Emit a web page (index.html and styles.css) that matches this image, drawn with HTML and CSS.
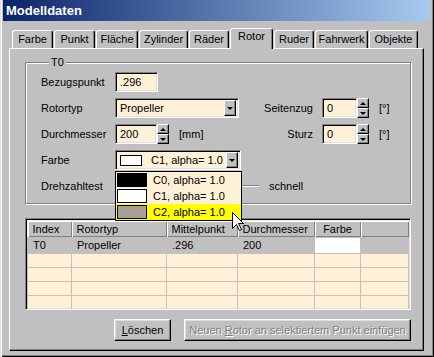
FILE: index.html
```html
<!DOCTYPE html>
<html lang="de">
<head>
    <meta charset="UTF-8">
    <title>Modelldaten</title>
    <link rel="stylesheet" href="styles.css">
</head>
<body>
    <div class="window">
        <div class="titlebar">Modelldaten</div>
        <div class="content">
            <div class="tabs">
                <div class="tab">Farbe</div>
                <div class="tab">Punkt</div>
                <div class="tab">Fläche</div>
                <div class="tab">Zylinder</div>
                <div class="tab">Räder</div>
                <div class="tab active">Rotor</div>
                <div class="tab">Ruder</div>
                <div class="tab">Fahrwerk</div>
                <div class="tab">Objekte</div>
            </div>
            <div class="page">
                <fieldset class="group">
                    <legend>T0</legend>
                    <div class="form">
                        <span class="label">Bezugspunkt</span>
                        <div class="cell"><div class="field w-ref">.296</div></div>

                        <span class="label">Rotortyp</span>
                        <div class="cell">
                            <div class="combo w-typ">
                                <span class="combo-text">Propeller</span>
                                <span class="combo-btn"><i class="down"></i></span>
                            </div>
                        </div>
                        <span class="label right">Seitenzug</span>
                        <div class="cell">
                            <div class="spin">
                                <div class="field w-small">0</div>
                                <div class="spin-btns"><span class="sbtn"><i class="up"></i></span><span class="sbtn"><i class="down"></i></span></div>
                            </div>
                        </div>
                        <span class="unit">[°]</span>

                        <span class="label">Durchmesser</span>
                        <div class="cell">
                            <div class="spin">
                                <div class="field w-dia">200</div>
                                <div class="spin-btns"><span class="sbtn"><i class="up"></i></span><span class="sbtn"><i class="down"></i></span></div>
                            </div>
                            <span class="unit">[mm]</span>
                        </div>
                        <span class="label right">Sturz</span>
                        <div class="cell">
                            <div class="spin">
                                <div class="field w-small">0</div>
                                <div class="spin-btns"><span class="sbtn"><i class="up"></i></span><span class="sbtn"><i class="down"></i></span></div>
                            </div>
                        </div>
                        <span class="unit">[°]</span>

                        <span class="label">Farbe</span>
                        <div class="cell">
                            <div class="combo w-col">
                                <span class="swatch white"></span>
                                <span class="combo-text">C1, alpha= 1.0</span>
                                <span class="combo-btn"><i class="down"></i></span>
                            </div>
                        </div>

                        <span class="label">Drehzahltest</span>
                        <div class="cell wide">
                            <div class="track"></div>
                            <span class="unit">schnell</span>
                        </div>
                    </div>
                </fieldset>

                <div class="grid">
                    <table>
                        <colgroup>
                            <col style="width:44px"><col style="width:95px"><col style="width:71px">
                            <col style="width:77px"><col style="width:46px"><col>
                        </colgroup>
                        <tr class="head">
                            <th>Index</th><th>Rotortyp</th><th>Mittelpunkt</th><th>Durchmesser</th><th class="center">Farbe</th><th></th>
                        </tr>
                        <tr class="selected">
                            <td>T0</td><td>Propeller</td><td>.296</td><td>200</td><td class="colour"></td><td></td>
                        </tr>
                        <tr><td></td><td></td><td></td><td></td><td></td><td></td></tr>
                        <tr><td></td><td></td><td></td><td></td><td></td><td></td></tr>
                        <tr><td></td><td></td><td></td><td></td><td></td><td></td></tr>
                        <tr><td></td><td></td><td></td><td></td><td></td><td></td></tr>
                    </table>
                </div>

                <div class="buttons">
                    <button class="btn w-del"><u>L</u>öschen</button>
                    <button class="btn w-new" disabled>Neuen <u>R</u>otor an selektiertem Punkt einfügen</button>
                </div>
            </div>
        </div>

        <!-- aufgeklappte Farbliste -->
        <div class="dropdown">
            <div class="item"><span class="swatch big black"></span>C0, alpha= 1.0</div>
            <div class="item"><span class="swatch big white"></span>C1, alpha= 1.0</div>
            <div class="item hot"><span class="swatch big grey"></span>C2, alpha= 1.0</div>
        </div>
        <svg class="cursor" width="12" height="20" viewBox="0 0 12 20">
            <path d="M0.5 0.5 L0.5 16.5 L4.5 12.5 L7.5 18.5 L9.5 17.5 L6.5 11.5 L11.5 11.5 Z" fill="#fff" stroke="#000" stroke-width="1"/>
        </svg>
    </div>
</body>
</html>
```

FILE: styles.css
```css
* {
    box-sizing: border-box;
}
body {
    margin: 0;
    font-family: "Liberation Sans", Arial, sans-serif;
    font-size: 11px;
    background-color: #c0c0c0;
}
.window {
    position: relative;
    width: 434px;
    height: 357px;
    padding: 0 4px 0 3px;
    background-color: #c0c0c0;
    box-shadow: inset 1px 0 #dfdfdf, inset 2px 0 #fff, inset -1px -1px #000, inset -2px -2px #808080;
    overflow: hidden;
}
.titlebar {
    height: 21px;
    line-height: 21px;
    padding-left: 3px;
    color: white;
    font-weight: bold;
    font-size: 13px;
    background: linear-gradient(to right, #0a246a, #a6caf0);
}
.content {
    padding: 7px 0 0 6px;
}

/* Reiter */
.tabs {
    display: flex;
    align-items: flex-end;
    gap: 1px;
    height: 20px;
    padding-left: 3px;
    position: relative;
    z-index: 1;
}
.tab {
    height: 18px;
    line-height: 17px;
    text-align: center;
    background-color: #c0c0c0;
    border: 1px solid #fff;
    border-bottom: none;
    border-right-color: #000;
    border-radius: 3px 3px 0 0;
    box-shadow: inset -1px 0 #808080;
}
.tab.active {
    height: 21px;
    line-height: 15px;
    margin-bottom: -1px;
}
.tab:nth-child(1) { width: 41px; }
.tab:nth-child(2) { width: 41px; }
.tab:nth-child(3) { width: 42px; }
.tab:nth-child(4) { width: 49px; }
.tab:nth-child(5) { width: 40px; }
.tab:nth-child(6) { width: 43px; }
.tab:nth-child(7) { width: 40px; }
.tab:nth-child(8) { width: 53px; }
.tab:nth-child(9) { width: 49px; }

.page {
    width: 415px;
    height: 303px;
    padding: 0 0 0 15px;
    border: 1px solid;
    border-color: #fff #000 #000 #fff;
    box-shadow: inset -1px -1px #808080;
}

/* Gruppe T0 */
.group {
    width: 386px;
    height: 148px;
    margin: 7px 0 0 0;
    padding: 3px 15px 0 15px;
    border: 1px solid #808080;
    box-shadow: inset 1px 1px #fff, 1px 1px #fff;
}
.group legend {
    padding: 0 2px;
    margin-left: 8px;
    line-height: 13px;
    background-color: #c0c0c0;
}
.form {
    display: grid;
    grid-template-columns: 74px 126px 81px 47px 1fr;
    grid-auto-rows: 20px;
    row-gap: 6px;
    align-items: center;
}
.label {
    grid-column: 1;
}
.label.right {
    grid-column: 3;
    text-align: right;
    padding-right: 9px;
}
.cell {
    display: flex;
    align-items: center;
    height: 20px;
}
.cell.wide {
    grid-column: 2 / 6;
}
.unit {
    padding-left: 10px;
}

.field {
    height: 20px;
    line-height: 18px;
    padding-left: 4px;
    background-color: #fff0d8;
    border: 1px solid;
    border-color: #808080 #fff #fff #808080;
    box-shadow: inset 1px 1px #000, inset -1px -1px #dfdfdf;
}
.w-ref { width: 43px; }
.w-dia { width: 42px; }
.w-small { width: 35px; }

.spin {
    display: flex;
}
.spin-btns {
    display: flex;
    flex-direction: column;
    width: 12px;
    height: 20px;
}
.sbtn {
    flex: 1;
    display: flex;
    align-items: center;
    justify-content: center;
    background-color: #c0c0c0;
    border: 1px solid;
    border-color: #fff #000 #000 #fff;
    box-shadow: inset -1px -1px #808080;
}

.combo {
    display: flex;
    align-items: center;
    height: 20px;
    padding: 2px;
    background-color: #fff0d8;
    border: 1px solid;
    border-color: #808080 #fff #fff #808080;
    box-shadow: inset 1px 1px #000, inset -1px -1px #dfdfdf;
}
.w-typ { width: 124px; }
.w-col { width: 126px; }
.combo-text {
    flex: 1;
    padding-left: 2px;
}
.combo-btn {
    width: 12px;
    height: 16px;
    display: flex;
    align-items: center;
    justify-content: center;
    background-color: #c0c0c0;
    border: 1px solid;
    border-color: #fff #000 #000 #fff;
    box-shadow: inset -1px -1px #808080;
}
.down {
    border-left: 3px solid transparent;
    border-right: 3px solid transparent;
    border-top: 3px solid #000;
}
.up {
    border-left: 3px solid transparent;
    border-right: 3px solid transparent;
    border-bottom: 3px solid #000;
}
.swatch {
    display: inline-block;
    width: 22px;
    height: 11px;
    margin: 0 7px 0 2px;
    border: 1px solid #000;
}
.swatch.big {
    width: 30px;
    height: 14px;
    margin: 0 6px 0 1px;
}
.black { background-color: #000; }
.white { background-color: #fff; }
.grey { background-color: #a8a098; }

.track {
    width: 144px;
    height: 2px;
    border-top: 1px solid #808080;
    border-bottom: 1px solid #fff;
}

/* Tabelle */
.grid {
    width: 386px;
    height: 92px;
    margin-top: 14px;
    background-color: #fff0d8;
    border: 1px solid;
    border-color: #808080 #fff #fff #808080;
    box-shadow: inset 1px 1px #000, inset -1px -1px #dfdfdf;
    padding: 2px 0 0 1px;
    overflow: hidden;
}
table {
    width: 382px;
    border-collapse: collapse;
    table-layout: fixed;
}
th {
    height: 16px;
    font-weight: normal;
    text-align: left;
    padding: 0 0 0 5px;
    background-color: #c0c0c0;
    box-shadow: inset 1px 1px #fff, inset -1px -1px #808080;
}
th.center {
    text-align: center;
    padding: 0;
}
td {
    height: 14px;
    padding: 0 0 0 5px;
    border: 1px solid #c8c0b8;
}
.selected td {
    height: 16px;
    background-color: #c0c0c0;
}
.selected td.colour {
    background-color: #fff;
}

/* Knöpfe */
.buttons {
    display: flex;
    justify-content: flex-end;
    gap: 13px;
    width: 386px;
    margin-top: 9px;
}
.btn {
    height: 22px;
    padding: 0;
    font-family: inherit;
    font-size: 11px;
    color: #000;
    background-color: #c0c0c0;
    border: 1px solid;
    border-color: #fff #000 #000 #fff;
    box-shadow: inset -1px -1px #808080, inset 1px 1px #dfdfdf;
}
.btn:disabled {
    color: #808080;
    text-shadow: 1px 1px #fff;
}
.w-del { width: 57px; }
.w-new { width: 227px; }

.dropdown {
    position: absolute;
    left: 115px;
    top: 171px;
    width: 127px;
    height: 50px;
    background-color: #fff0d8;
    border: 1px solid #000;
}
.item {
    display: flex;
    align-items: center;
    height: 16px;
}
.item.hot {
    background-color: #ffff00;
}
.cursor {
    position: absolute;
    left: 232px;
    top: 212px;
}
```
